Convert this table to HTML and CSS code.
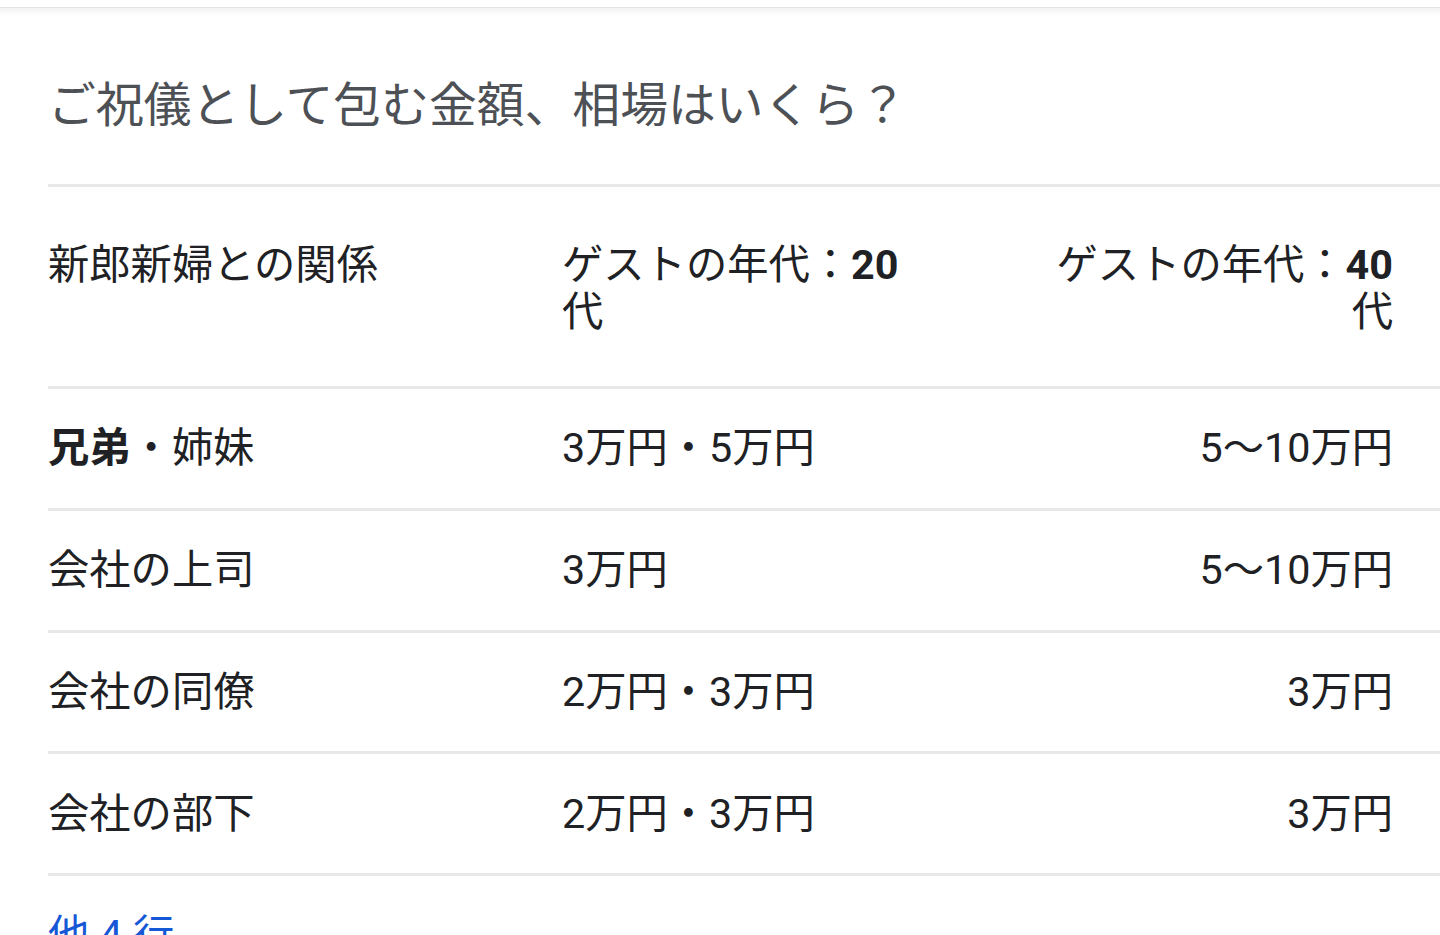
FILE: index.html
```html
<!DOCTYPE html>
<html lang="ja">
<head>
<meta charset="utf-8">
<title>ご祝儀として包む金額、相場はいくら？</title>
<link rel="stylesheet" href="styles.css">
</head>
<body>
<div class="top-edge"></div>
<main class="card">
  <h2 class="title">ご祝儀として包む金額、相場はいくら？</h2>
  <div class="table">
    <div class="row head">
      <div class="cell c1">新郎新婦との関係</div>
      <div class="cell c2">ゲストの年代：<b>20</b>代</div>
      <div class="cell c3">ゲストの年代：<b>40</b>代</div>
    </div>
    <div class="row">
      <div class="cell c1"><b>兄弟</b>・姉妹</div>
      <div class="cell c2">3万円・5万円</div>
      <div class="cell c3">5〜10万円</div>
    </div>
    <div class="row">
      <div class="cell c1">会社の上司</div>
      <div class="cell c2">3万円</div>
      <div class="cell c3">5〜10万円</div>
    </div>
    <div class="row">
      <div class="cell c1">会社の同僚</div>
      <div class="cell c2">2万円・3万円</div>
      <div class="cell c3">3万円</div>
    </div>
    <div class="row">
      <div class="cell c1">会社の部下</div>
      <div class="cell c2">2万円・3万円</div>
      <div class="cell c3">3万円</div>
    </div>
  </div>
  <a class="more" href="#">他 4 行</a>
</main>
</body>
</html>
```

FILE: styles.css
```css
html, body {
  margin: 0;
  padding: 0;
  background: #ffffff;
}

body {
  font-family: Roboto, "Noto Sans CJK JP", sans-serif;
  color: #202124;
  overflow: hidden;
}

.top-edge {
  height: 7px;
  background: #ffffff;
  border-bottom: 1px solid #e3e3e3;
}

.card {
  background: linear-gradient(#f2f2f2 0, #ffffff 8px);
  padding-left: 48px;
}

.title {
  margin: 0;
  padding: 70px 0 50px;
  font-size: 47.8px;
  line-height: 56px;
  font-weight: 400;
  color: #4d5156;
  border-bottom: 3px solid #e8e8e8;
}

.table {
  display: flex;
  flex-direction: column;
}

.row {
  display: grid;
  grid-template-columns: 514px 471px 407px;
  border-bottom: 3px solid #e8e8e8;
  font-size: 41.3px;
  line-height: 48px;
  padding: 35.4px 0;
}

.row.head {
  padding: 55px 0 50px;
  line-height: 47px;
}

.cell b {
  font-weight: 700;
}

.c1 {
  padding-right: 40px;
}

.c2 {
  padding-right: 100px;
}

.c3 {
  padding-right: 47px;
  text-align: right;
}

.more {
  display: block;
  padding-top: 35px;
  font-size: 41.3px;
  line-height: 48px;
  color: #1558d6;
  text-decoration: none;
}
```
